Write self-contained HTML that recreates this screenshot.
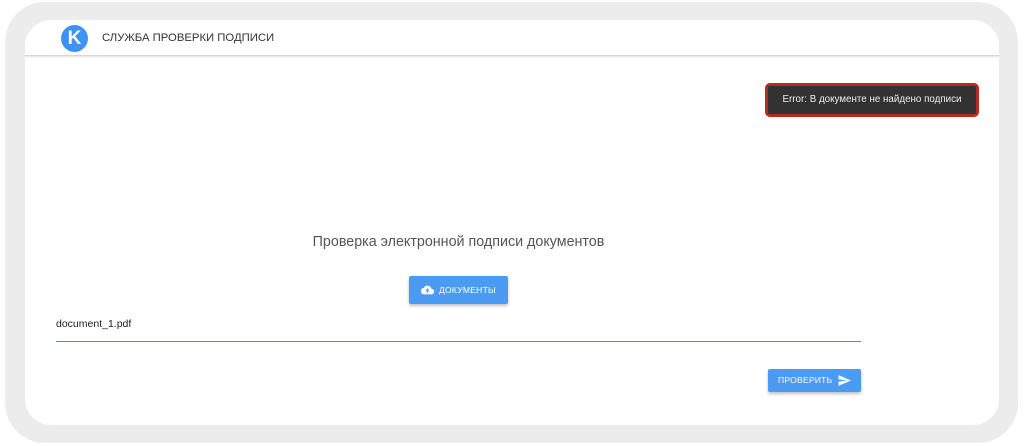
<!DOCTYPE html>
<html><head><meta charset="utf-8"><style>
*{margin:0;padding:0;box-sizing:border-box}
body{width:1024px;height:446px;background:#fff;position:relative;overflow:hidden;font-family:"Liberation Sans","Noto Sans CJK SC",sans-serif}
.outer{position:absolute;left:5px;top:2px;width:1013px;height:441px;background:#ececec;border-radius:40px}
.inner{position:absolute;left:25px;top:20px;width:974px;height:405px;background:#fff;border-radius:26px;overflow:hidden}
.hdr{position:absolute;left:0;top:0;width:100%;height:36px;border-bottom:1px solid #d6d6d6;box-shadow:0 1px 2px rgba(0,0,0,.12)}
.logo{position:absolute;left:36px;top:5px;width:27px;height:27px;border-radius:50%;background:#3d92f2;color:#fff;font-weight:bold;font-size:19px;line-height:27px;text-align:center}
.title{position:absolute;left:77px;top:12px;font-size:11.3px;color:#333}
.toast{position:absolute;left:740px;top:63px;width:214px;height:34px;background:#323232;border:3px solid #b72a22;border-radius:5px;color:#eee;font-size:9.8px;line-height:28px;text-align:center}
.h{position:absolute;left:31px;width:805px;top:214px;text-align:center;font-size:14.3px;color:#555}
.btn{position:absolute;background:#4b9bf3;color:#fff;font-size:8.6px;letter-spacing:.2px;border-radius:2px;box-shadow:0 2px 3px rgba(0,0,0,.25)}
.file{position:absolute;left:31px;top:298px;font-size:10.5px;color:#222}
.line{position:absolute;left:31px;top:321px;width:805px;height:1px;background:#3cb83c}
</style></head><body>
<div class="outer"></div>
<div class="inner">
<div class="hdr"><div class="logo">K</div><div class="title">СЛУЖБА ПРОВЕРКИ ПОДПИСИ</div></div>
<div class="toast">Error: В документе не найдено подписи</div>
<div class="h">Проверка электронной подписи документов</div>
<div class="btn" style="left:384px;top:256px;width:99px;height:28px;">
<svg style="position:absolute;left:12px;top:9px" width="13" height="10" viewBox="0 0 24 16"><path d="M19.4 6A7.5 7.5 0 0 0 5.4 4 6 6 0 0 0 6 16h13a5 5 0 0 0 .4-10z" fill="#fff"/><path d="M12 5l-4 4h2.5v4h3V9H16z" fill="#4b9bf3"/></svg>
<span style="position:absolute;left:30px;top:9px">ДОКУМЕНТЫ</span></div>
<div class="file">document_1.pdf</div>
<div class="line"></div>
<div class="btn" style="left:743px;top:349px;width:93px;height:23px;">
<span style="position:absolute;left:10px;top:6px">ПРОВЕРИТЬ</span>
<svg style="position:absolute;left:70px;top:6px" width="13" height="11" viewBox="0 0 24 20"><path d="M1 20L24 10 1 0v8l16 2-16 2z" fill="#fff"/></svg></div>
</div>
</body></html>
